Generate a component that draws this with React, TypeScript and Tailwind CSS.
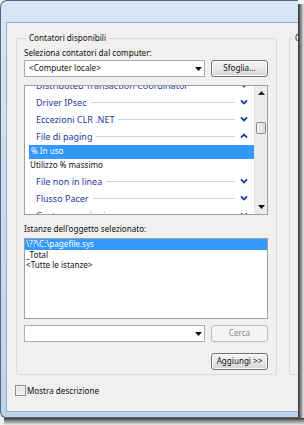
import React from "react";

const Chevron = ({ up }: { up?: boolean }) => (
  <svg width="8" height="6" viewBox="0 0 8 6" className="shrink-0">
    <path
      d={up ? "M1 4.6 L4 1.6 L7 4.6" : "M1 1.4 L4 4.4 L7 1.4"}
      fill="none"
      stroke="#1d3ba3"
      strokeWidth="1.9"
    />
  </svg>
);

const Category = ({ label, up }: { label: string; up?: boolean }) => (
  <div className="h-[17px] flex items-center pl-[11px] shrink-0">
    <span className="text-[#27399b] text-[9px] leading-none whitespace-nowrap">{label}</span>
    <div className="flex-1 min-w-[10px] h-px bg-[#c5d4ed] ml-[4px] mr-[5px]" />
    <Chevron up={up} />
    <div className="w-[6px] shrink-0" />
  </div>
);

const DownTri = () => (
  <svg width="7" height="4" viewBox="0 0 7 4">
    <path d="M0 0 H7 L3.5 4 Z" fill="#111" />
  </svg>
);

const Combo = ({ text }: { text?: string }) => (
  <div className="w-[181px] h-[17px] bg-white border border-[#abadb3] flex items-center">
    <span className="flex-1 pl-[4px] leading-none text-[8.1px] text-[#111]">{text}</span>
    <div className="w-[12px] flex justify-center items-center">
      <DownTri />
    </div>
  </div>
);

const Button = ({ label, disabled }: { label: string; disabled?: boolean }) => (
  <div
    className={
      disabled
        ? "w-[57px] h-[17px] rounded-[3px] border border-[#b8bcc0] bg-[#f4f4f4] flex items-center justify-center text-[8.1px] leading-none text-[#8a8a8a]"
        : "w-[57px] h-[17px] rounded-[3px] border border-[#6f6f6f] bg-gradient-to-b from-[#f4f4f4] via-[#e9e9e9] to-[#d3d3d3] shadow-[inset_0_0_0_1px_#fbfbfb] flex items-center justify-center text-[8.1px] leading-none text-[#111]"
    }
  >
    {label}
  </div>
);

export default function App() {
  return (
    <div className="w-[304px] h-[425px] bg-[#f2f2f2] flex flex-col overflow-hidden font-['Noto_Sans',sans-serif]">
      <div className="flex h-[418px] shrink-0">
        {/* window */}
        <div className="w-[298px] h-[418px] shrink-0 rounded-tl-[7px] rounded-bl-[6px] border-l border-t border-b border-[#56677d] bg-gradient-to-b from-[#d8e6f6] via-[#c9dcf1] to-[#bcd3ec] pt-[21px] pl-[5px] pb-[5px] flex flex-col">
          {/* client area */}
          <div className="flex-1 bg-[#f0f0f0] border-t border-l border-b border-[#9aadc4] flex flex-col overflow-hidden">
            <div className="flex gap-[12px] pl-[9px] pt-[9px]">
              <fieldset className="w-[261px] shrink-0 border border-[#d5dbe1] rounded-[2px] pl-[7px] pr-[8px] pb-[4px] flex flex-col">
                <legend className="ml-[3px] px-[2px] text-[8.1px] leading-[12px] text-[#111]">Contatori disponibili</legend>
                <div className="mt-[3px] text-[8.1px] leading-[12px] text-[#111]">Seleziona contatori dal computer:</div>
                <div className="mt-[1px] flex items-center gap-[6px] h-[17px]">
                  <Combo text="<Computer locale>" />
                  <Button label="Sfoglia..." />
                </div>
                {/* counters list */}
                <div className="mt-[8px] h-[130px] bg-white border border-[#a0a0a0] flex overflow-hidden">
                  <div className="flex-1 min-w-0 overflow-hidden flex flex-col">
                    <div className="-mt-[9.5px] flex flex-col">
                      <Category label="Distributed Transaction Coordinator" />
                      <Category label="Driver IPsec" />
                      <Category label="Eccezioni CLR .NET" />
                      <Category label="File di paging" up />
                      <div className="h-[14px] ml-[4px] bg-[#3399ff] flex items-center pl-[2px] text-[8.1px] leading-none text-white">% In uso</div>
                      <div className="h-[14px] ml-[4px] flex items-center pl-[1px] text-[8.1px] leading-none text-[#111]">Utilizzo % massimo</div>
                      <Category label="File non in linea" />
                      <Category label="Flusso Pacer" />
                      <Category label="Gestore sessioni" />
                    </div>
                  </div>
                  {/* scrollbar */}
                  <div className="w-[13px] shrink-0 bg-[#ececec] border-l border-[#e2e2e2] flex flex-col">
                    <div className="h-[14px] flex items-center justify-center">
                      <svg width="7" height="4" viewBox="0 0 7 4">
                        <path d="M0 4 H7 L3.5 0 Z" fill="#222" />
                      </svg>
                    </div>
                    <div className="mt-[22px] mx-[1px] h-[12px] rounded-[2px] border border-[#8e8f91] bg-gradient-to-r from-[#f4f4f4] to-[#d9d9d9]" />
                    <div className="flex-1" />
                    <div className="h-[14px] flex items-center justify-center">
                      <DownTri />
                    </div>
                  </div>
                </div>
                <div className="mt-[8px] text-[8.1px] leading-[12px] text-[#111]">Istanze dell'oggetto selezionato:</div>
                {/* instances list */}
                <div className="mt-[3px] h-[81px] bg-white border border-[#a0a0a0] flex flex-col text-[8.1px] leading-[10.5px] text-[#111]">
                  <div className="bg-[#3399ff] text-white pl-[1px]">\??\C:\pagefile.sys</div>
                  <div className="pl-[1px]">_Total</div>
                  <div className="pl-[1px]">&lt;Tutte le istanze&gt;</div>
                </div>
                <div className="mt-[6px] flex items-center gap-[6px] h-[17px]">
                  <Combo />
                  <Button label="Cerca" disabled />
                </div>
                <div className="mt-[11px] flex justify-end">
                  <Button label="Aggiungi >>" />
                </div>
              </fieldset>
              <fieldset className="w-[200px] shrink-0 border border-[#d5dbe1] rounded-[2px]">
                <legend className="ml-[3px] px-[2px] text-[8.1px] leading-[12px] text-[#111]">Contatori aggiunti</legend>
              </fieldset>
            </div>
            <div className="mt-[10px] pl-[8px] flex items-center">
              <div className="w-[11px] h-[11px] border border-[#8e8f8f] bg-gradient-to-br from-[#dcdcdc] to-[#f6f6f6] shadow-[inset_0_0_0_1px_#f4f4f4]" />
              <span className="ml-[1px] text-[8.1px] leading-[11px] text-[#111]">Mostra descrizione</span>
            </div>
          </div>
        </div>
        {/* right shadow */}
        <div className="w-[6px] shrink-0 flex flex-col">
          <div className="h-[4px] bg-[#f2f2f2]" />
          <div className="flex-1 bg-gradient-to-r from-[#2f2f2f] via-[#8c8c8c] to-[#e6e6e6]" />
        </div>
      </div>
      <div className="flex h-[7px]">
        <div className="w-[4px] bg-[#f2f2f2]" />
        <div className="flex-1 bg-gradient-to-b from-[#3a3a3a] via-[#9a9a9a] to-[#eaeaea]" />
      </div>
    </div>
  );
}
